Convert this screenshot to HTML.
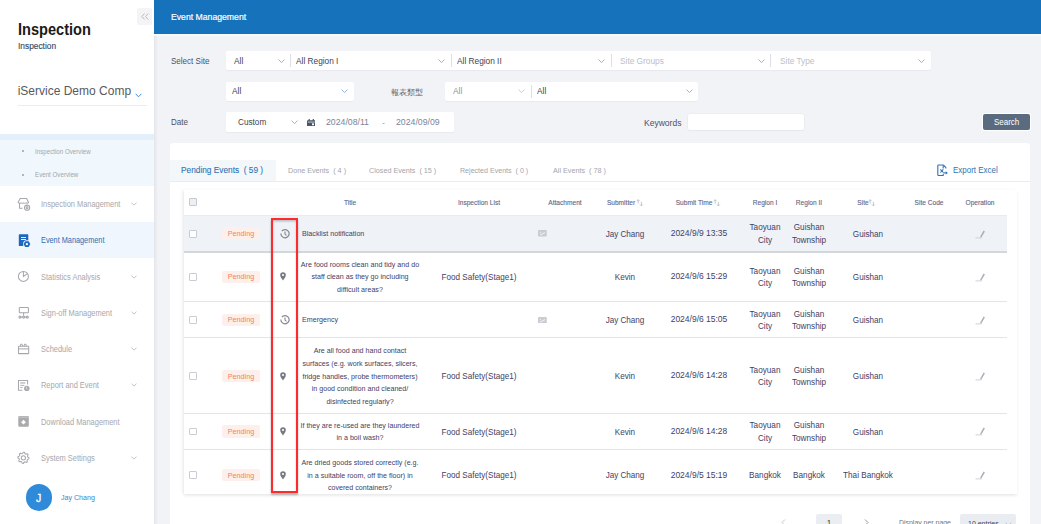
<!DOCTYPE html>
<html><head><meta charset="utf-8">
<style>
*{box-sizing:border-box;margin:0;padding:0}
html,body{width:1041px;height:524px;overflow:hidden;background:#f2f3f7;font-family:"Liberation Sans",sans-serif;}
.a{position:absolute;white-space:nowrap;line-height:1}
</style></head><body>
<div class="a" style="left:0.0px;top:0.0px;width:154.0px;height:524.0px;background:#fff;"></div>
<div class="a" style="left:154.0px;top:34.0px;width:4.0px;height:490.0px;background:linear-gradient(to right,#e4e5ea,#f2f3f7);"></div>
<div class="a" style="left:17.8px;top:21.07px;font-size:16.22px;color:#1b1b1b;transform:scaleX(0.900);transform-origin:0 0;font-weight:bold">Inspection</div>
<div class="a" style="left:17.8px;top:41.84px;font-size:9.29px;color:#3a4c63;transform:scaleX(0.900);transform-origin:0 0;-webkit-text-stroke:0.15px currentColor;">Inspection</div>
<div class="a" style="left:137.0px;top:8.0px;width:15.3px;height:16.8px;background:#f4f4f6;border-radius:2px"></div>
<svg class="a" style="left:141px;top:13px" width="8" height="7" viewBox="0 0 8 7"><path d="M3.5 0.5 L0.8 3.5 L3.5 6.5 M7.2 0.5 L4.5 3.5 L7.2 6.5" fill="none" stroke="#a8abb2" stroke-width="0.8"/></svg>
<div class="a" style="left:17.7px;top:84.84px;font-size:12.00px;color:#58595c;">iService Demo Comp</div>
<svg class="a" style="left:135px;top:92.5px" width="7" height="5" viewBox="0 0 7 5"><path d="M0.6 0.8 L3.5 3.8 L6.4 0.8" fill="none" stroke="#3a8ee6" stroke-width="1"/></svg>
<div class="a" style="left:17.7px;top:105.0px;width:129.5px;height:1.0px;background:#ececec;"></div>
<div class="a" style="left:0.0px;top:134.0px;width:154.0px;height:6.0px;background:#e3f0fb;"></div>
<div class="a" style="left:0.0px;top:140.0px;width:154.0px;height:46.0px;background:#f0f7fd;"></div>
<div class="a" style="left:22.4px;top:150.3px;width:2.0px;height:2.0px;background:#a0a0a0;border-radius:50%"></div>
<div class="a" style="left:34.9px;top:149.17px;font-size:6.89px;color:#a6a6a6;transform:scaleX(0.900);transform-origin:0 0;">Inspection Overview</div>
<div class="a" style="left:22.4px;top:173.5px;width:2.0px;height:2.0px;background:#a0a0a0;border-radius:50%"></div>
<div class="a" style="left:34.9px;top:172.37px;font-size:6.89px;color:#a6a6a6;transform:scaleX(0.900);transform-origin:0 0;">Event Overview</div>
<div class="a" style="left:0.0px;top:222.0px;width:154.0px;height:36.0px;background:#eff6fd;"></div>
<div class="a" style="left:40.8px;top:201.19px;font-size:8.28px;color:#a6a8ad;transform:scaleX(0.900);transform-origin:0 0;">Inspection Management</div>
<svg class="a" style="left:130.5px;top:202.2px" width="6" height="4" viewBox="0 0 6 4"><path d="M0.5 0.6 L3 3.2 L5.5 0.6" fill="none" stroke="#b4b6bb" stroke-width="0.8"/></svg>
<div class="a" style="left:40.8px;top:237.42px;font-size:8.13px;color:#2c6fb5;transform:scaleX(0.900);transform-origin:0 0;">Event Management</div>
<div class="a" style="left:40.8px;top:273.59px;font-size:8.28px;color:#a6a8ad;transform:scaleX(0.900);transform-origin:0 0;">Statistics Analysis</div>
<svg class="a" style="left:130.5px;top:274.6px" width="6" height="4" viewBox="0 0 6 4"><path d="M0.5 0.6 L3 3.2 L5.5 0.6" fill="none" stroke="#b4b6bb" stroke-width="0.8"/></svg>
<div class="a" style="left:40.8px;top:309.99px;font-size:8.28px;color:#a6a8ad;transform:scaleX(0.900);transform-origin:0 0;">Sign-off Management</div>
<svg class="a" style="left:130.5px;top:311.0px" width="6" height="4" viewBox="0 0 6 4"><path d="M0.5 0.6 L3 3.2 L5.5 0.6" fill="none" stroke="#b4b6bb" stroke-width="0.8"/></svg>
<div class="a" style="left:40.8px;top:346.29px;font-size:8.28px;color:#a6a8ad;transform:scaleX(0.900);transform-origin:0 0;">Schedule</div>
<svg class="a" style="left:130.5px;top:347.3px" width="6" height="4" viewBox="0 0 6 4"><path d="M0.5 0.6 L3 3.2 L5.5 0.6" fill="none" stroke="#b4b6bb" stroke-width="0.8"/></svg>
<div class="a" style="left:40.8px;top:382.39px;font-size:8.28px;color:#a6a8ad;transform:scaleX(0.900);transform-origin:0 0;">Report and Event</div>
<svg class="a" style="left:130.5px;top:383.4px" width="6" height="4" viewBox="0 0 6 4"><path d="M0.5 0.6 L3 3.2 L5.5 0.6" fill="none" stroke="#b4b6bb" stroke-width="0.8"/></svg>
<div class="a" style="left:40.8px;top:418.79px;font-size:8.28px;color:#a6a8ad;transform:scaleX(0.900);transform-origin:0 0;">Download Management</div>
<div class="a" style="left:40.8px;top:455.09px;font-size:8.28px;color:#a6a8ad;transform:scaleX(0.900);transform-origin:0 0;">System Settings</div>
<svg class="a" style="left:130.5px;top:456.1px" width="6" height="4" viewBox="0 0 6 4"><path d="M0.5 0.6 L3 3.2 L5.5 0.6" fill="none" stroke="#b4b6bb" stroke-width="0.8"/></svg>
<svg class="a" style="left:14px;top:195px" width="20" height="18" viewBox="0 0 20 18"><g fill="none" stroke="#a6a8ad" stroke-width="1.05" stroke-linejoin="round"><path d="M6.2 3.4 H12.6 L14.6 7.4 Q13.6 8.6 12.2 7.9 Q11 8.7 9.6 7.9 Q8.2 8.7 6.9 7.9 Q5.4 8.6 4 7.4 Z"/><path d="M5.5 8.3 V13.3 H8.6"/><circle cx="13.1" cy="12.7" r="2.6"/><circle cx="13.1" cy="12.7" r="0.9"/></g></svg>
<svg class="a" style="left:14px;top:231px" width="20" height="18" viewBox="0 0 20 18"><rect x="4.8" y="3.3" width="9.5" height="11.7" rx="0.6" fill="#1d67c1"/><rect x="7" y="6" width="5" height="0.9" fill="#fff"/><rect x="7" y="8" width="5" height="0.9" fill="#fff"/><circle cx="12.9" cy="13.1" r="3.9" fill="#f0f7fd"/><path d="M11.2 10.3 H14.6 L16.3 13.1 L14.6 15.9 H11.2 L9.5 13.1 Z" fill="#1d67c1"/><circle cx="12.9" cy="13.1" r="1.2" fill="#fff"/></svg>
<svg class="a" style="left:14px;top:268px" width="20" height="18" viewBox="0 0 20 18"><g fill="none" stroke="#a6a8ad" stroke-width="1.05"><circle cx="9.4" cy="8.4" r="5"/><path d="M9.4 3.4 V8.4 L13.4 5.6"/></g></svg>
<svg class="a" style="left:14px;top:304px" width="20" height="18" viewBox="0 0 20 18"><g fill="none" stroke="#a6a8ad" stroke-width="1.05"><rect x="5.3" y="3.4" width="9.1" height="5.4" rx="0.6"/><path d="M9.6 8.8 V11.8"/><circle cx="5.9" cy="13.1" r="1"/><circle cx="9.6" cy="13.1" r="1"/><circle cx="13.3" cy="13.1" r="1"/><path d="M6.9 13.1 H8.6 M10.6 13.1 H12.3"/></g></svg>
<svg class="a" style="left:14px;top:340px" width="20" height="18" viewBox="0 0 20 18"><g fill="none" stroke="#a6a8ad" stroke-width="1.05"><rect x="4.5" y="6.3" width="10.2" height="7.3" rx="0.4"/><path d="M4.5 8.9 H14.7"/><path d="M6.2 6.3 Q6.4 3.9 7.4 3.9 Q8.4 3.9 8.6 6.3 M10 6.3 Q10.2 3.9 11.2 3.9 Q12.2 3.9 12.4 6.3"/></g></svg>
<svg class="a" style="left:14px;top:376px" width="20" height="18" viewBox="0 0 20 18"><g fill="none" stroke="#a6a8ad" stroke-width="1.05"><path d="M8.4 14.3 H4.5 V4.4 H13.6 V8.4"/></g><rect x="6.2" y="6.4" width="5.2" height="1.1" fill="#a6a8ad"/><rect x="6.2" y="8.9" width="4.2" height="0.9" fill="#a6a8ad"/><rect x="6.2" y="11" width="2.3" height="0.9" fill="#a6a8ad"/><circle cx="12.8" cy="12.4" r="2.7" fill="#a6a8ad"/><path d="M12.5 10.9 V12.6 L13.6 13.5" fill="none" stroke="#fff" stroke-width="0.6"/></svg>
<svg class="a" style="left:14px;top:412px" width="20" height="18" viewBox="0 0 20 18"><rect x="4.3" y="4" width="10.5" height="10.8" rx="1" fill="#a9aaad"/><rect x="4.8" y="4.4" width="9.5" height="1.6" fill="#bdbec1"/><path d="M9.5 7.8 L11.9 10.2 L9.5 12.6 L7.1 10.2 Z" fill="#fff"/></svg>
<svg class="a" style="left:14px;top:449px" width="20" height="18" viewBox="0 0 20 18"><g fill="none" stroke="#a6a8ad" stroke-width="1.05" stroke-linejoin="round"><path d="M9.40 3.20 L10.49 3.31 L11.08 4.73 L11.84 5.14 L13.36 4.84 L14.06 5.69 L13.47 7.12 L13.72 7.94 L15.00 8.80 L14.89 9.89 L13.47 10.48 L13.06 11.24 L13.36 12.76 L12.51 13.46 L11.08 12.87 L10.26 13.12 L9.40 14.40 L8.31 14.29 L7.72 12.87 L6.96 12.46 L5.44 12.76 L4.74 11.91 L5.33 10.48 L5.08 9.66 L3.80 8.80 L3.91 7.71 L5.33 7.12 L5.74 6.36 L5.44 4.84 L6.29 4.14 L7.72 4.73 L8.54 4.48 Z"/><circle cx="9.4" cy="8.8" r="2.1"/></g></svg>
<div class="a" style="left:25.8px;top:484.2px;width:26.5px;height:26.5px;background:#2f8bd9;border-radius:50%"></div>
<div class="a" style="left:35.9px;top:491.82px;font-size:11.67px;color:#fff;transform:scaleX(0.900);transform-origin:0 0;-webkit-text-stroke:0.3px #fff;">J</div>
<div class="a" style="left:61.1px;top:494.05px;font-size:7.86px;color:#3b87c9;transform:scaleX(0.900);transform-origin:0 0;">Jay Chang</div>
<div class="a" style="left:154.0px;top:0.0px;width:887.0px;height:34.0px;background:#1572bb;"></div>
<div class="a" style="left:154.0px;top:34.0px;width:887.0px;height:2.0px;background:#f8f8fa;"></div>
<div class="a" style="left:170.7px;top:12.24px;font-size:9.64px;color:#ffffff;transform:scaleX(0.900);transform-origin:0 0;-webkit-text-stroke:0.2px #fff;">Event Management</div>
<div class="a" style="left:170.5px;top:56.83px;font-size:8.94px;color:#4d5263;transform:scaleX(0.900);transform-origin:0 0;">Select Site</div>
<div class="a" style="left:226.0px;top:51.0px;width:705.0px;height:19.2px;background:#fff;border-radius:2px;box-shadow:0 1px 1px rgba(40,50,80,0.05);"></div>
<div class="a" style="left:234.4px;top:56.59px;font-size:9.22px;color:#3f4350;transform:scaleX(0.900);transform-origin:0 0;">All</div>
<svg class="a" style="left:277.5px;top:58.6px" width="7" height="4.5" viewBox="0 0 7 4.5"><path d="M0.6 0.6 L3.5 3.6 L6.4 0.6" fill="none" stroke="#8fa9d8" stroke-width="0.9"/></svg>
<div class="a" style="left:289.9px;top:54.1px;width:1.0px;height:13.0px;background:#dcdfe5;"></div>
<div class="a" style="left:296.0px;top:56.59px;font-size:9.22px;color:#3f4350;transform:scaleX(0.900);transform-origin:0 0;">All Region I</div>
<svg class="a" style="left:437.5px;top:58.6px" width="7" height="4.5" viewBox="0 0 7 4.5"><path d="M0.6 0.6 L3.5 3.6 L6.4 0.6" fill="none" stroke="#8fa9d8" stroke-width="0.9"/></svg>
<div class="a" style="left:450.5px;top:54.1px;width:1.0px;height:13.0px;background:#dcdfe5;"></div>
<div class="a" style="left:457.0px;top:56.59px;font-size:9.22px;color:#3f4350;transform:scaleX(0.900);transform-origin:0 0;">All Region II</div>
<svg class="a" style="left:597.7px;top:58.6px" width="7" height="4.5" viewBox="0 0 7 4.5"><path d="M0.6 0.6 L3.5 3.6 L6.4 0.6" fill="none" stroke="#8fa9d8" stroke-width="0.9"/></svg>
<div class="a" style="left:610.5px;top:54.1px;width:1.0px;height:13.0px;background:#dcdfe5;"></div>
<div class="a" style="left:619.8px;top:56.59px;font-size:9.22px;color:#b9bfca;transform:scaleX(0.900);transform-origin:0 0;">Site Groups</div>
<svg class="a" style="left:757.7px;top:58.6px" width="7" height="4.5" viewBox="0 0 7 4.5"><path d="M0.6 0.6 L3.5 3.6 L6.4 0.6" fill="none" stroke="#8fa9d8" stroke-width="0.9"/></svg>
<div class="a" style="left:770.3px;top:54.1px;width:1.0px;height:13.0px;background:#dcdfe5;"></div>
<div class="a" style="left:779.6px;top:56.59px;font-size:9.22px;color:#b9bfca;transform:scaleX(0.900);transform-origin:0 0;">Site Type</div>
<svg class="a" style="left:918.4px;top:58.6px" width="7" height="4.5" viewBox="0 0 7 4.5"><path d="M0.6 0.6 L3.5 3.6 L6.4 0.6" fill="none" stroke="#8fa9d8" stroke-width="0.9"/></svg>
<div class="a" style="left:226.0px;top:81.6px;width:128.0px;height:19.4px;background:#fff;border-radius:2px;box-shadow:0 1px 1px rgba(40,50,80,0.05);"></div>
<div class="a" style="left:231.6px;top:87.29px;font-size:9.22px;color:#3f4350;transform:scaleX(0.900);transform-origin:0 0;">All</div>
<svg class="a" style="left:341.2px;top:89.3px" width="7" height="4.5" viewBox="0 0 7 4.5"><path d="M0.6 0.6 L3.5 3.6 L6.4 0.6" fill="none" stroke="#8fa9d8" stroke-width="0.9"/></svg>
<div class="a" style="left:390.6px;top:88.96px;font-size:8.20px;color:#5b5e66;">報表類型</div>
<div class="a" style="left:445.0px;top:81.6px;width:253.0px;height:19.4px;background:#fff;border-radius:2px;box-shadow:0 1px 1px rgba(40,50,80,0.05);"></div>
<div class="a" style="left:453.2px;top:87.29px;font-size:9.22px;color:#8a91a8;transform:scaleX(0.900);transform-origin:0 0;">All</div>
<svg class="a" style="left:518.0px;top:89.3px" width="7" height="4.5" viewBox="0 0 7 4.5"><path d="M0.6 0.6 L3.5 3.6 L6.4 0.6" fill="none" stroke="#c3c7cf" stroke-width="0.9"/></svg>
<div class="a" style="left:530.9px;top:84.8px;width:1.0px;height:13.0px;background:#dcdfe5;"></div>
<div class="a" style="left:536.9px;top:87.29px;font-size:9.22px;color:#3f4350;transform:scaleX(0.900);transform-origin:0 0;">All</div>
<svg class="a" style="left:685.5px;top:89.3px" width="7" height="4.5" viewBox="0 0 7 4.5"><path d="M0.6 0.6 L3.5 3.6 L6.4 0.6" fill="none" stroke="#8fa9d8" stroke-width="0.9"/></svg>
<div class="a" style="left:170.5px;top:118.43px;font-size:8.94px;color:#4d5263;transform:scaleX(0.900);transform-origin:0 0;">Date</div>
<div class="a" style="left:226.0px;top:112.2px;width:228.3px;height:19.8px;background:#fff;border-radius:2px;box-shadow:0 1px 1px rgba(40,50,80,0.05);"></div>
<div class="a" style="left:238.1px;top:118.28px;font-size:9.12px;color:#3f4350;transform:scaleX(0.900);transform-origin:0 0;">Custom</div>
<svg class="a" style="left:290.8px;top:120.1px" width="7" height="4.5" viewBox="0 0 7 4.5"><path d="M0.6 0.6 L3.5 3.6 L6.4 0.6" fill="none" stroke="#8fa9d8" stroke-width="0.9"/></svg>
<svg class="a" style="left:306.8px;top:118.6px" width="8.5" height="7.6" viewBox="0 0 8.5 7.6"><rect x="0" y="1.2" width="8.5" height="6.4" rx="0.8" fill="#4a5568"/><rect x="1.6" y="0" width="1.2" height="2" fill="#4a5568"/><rect x="5.7" y="0" width="1.2" height="2" fill="#4a5568"/><rect x="0.8" y="2.7" width="6.9" height="0.7" fill="#fff"/><rect x="5" y="4.4" width="2" height="1.8" fill="#fff"/></svg>
<div class="a" style="left:325.8px;top:117.71px;font-size:9.08px;color:#7c8399;transform:scaleX(0.960);transform-origin:0 0;">2024/08/11</div>
<div class="a" style="left:382.3px;top:117.80px;font-size:9.69px;color:#9aa0b0;transform:scaleX(0.900);transform-origin:0 0;">-</div>
<div class="a" style="left:396.0px;top:117.71px;font-size:9.08px;color:#7c8399;transform:scaleX(0.960);transform-origin:0 0;">2024/09/09</div>
<div class="a" style="left:643.7px;top:117.59px;font-size:9.47px;color:#4d5263;transform:scaleX(0.900);transform-origin:0 0;">Keywords</div>
<div class="a" style="left:687.5px;top:113.7px;width:116.8px;height:16.0px;background:#fff;border-radius:2px;box-shadow:0 1px 1px rgba(40,50,80,0.05);box-shadow:0 0 0 0.5px #e6e8ee,0 1px 1px rgba(40,50,80,0.06)"></div>
<div class="a" style="left:983.2px;top:113.8px;width:46.8px;height:16.2px;background:#5a6b7f;border-radius:2px;box-shadow:0 0 0 1px #fff"></div>
<div class="a" style="left:993.9px;top:118.18px;font-size:8.89px;color:#ffffff;transform:scaleX(0.900);transform-origin:0 0;">Search</div>
<div class="a" style="left:170.4px;top:143.0px;width:859.6px;height:400.0px;background:#fff;border-radius:4px"></div>
<div class="a" style="left:170.4px;top:159.6px;width:106.0px;height:21.6px;background:#f4f7fa;"></div>
<div class="a" style="left:170.4px;top:181.0px;width:859.6px;height:1.0px;background:#e9ebef;"></div>
<div class="a" style="left:181.4px;top:166.29px;font-size:9.22px;color:#2e73b4;transform:scaleX(0.900);transform-origin:0 0;-webkit-text-stroke:0.1px currentColor;">Pending Events&nbsp;&nbsp;( 59 )</div>
<div class="a" style="left:287.5px;top:167.23px;font-size:8.00px;color:#a2a5ac;transform:scaleX(0.900);transform-origin:0 0;">Done Events&nbsp;&nbsp;( 4 )</div>
<div class="a" style="left:368.9px;top:167.23px;font-size:8.00px;color:#a2a5ac;transform:scaleX(0.900);transform-origin:0 0;">Closed Events&nbsp;&nbsp;( 15 )</div>
<div class="a" style="left:460.2px;top:167.32px;font-size:7.89px;color:#a2a5ac;transform:scaleX(0.900);transform-origin:0 0;">Rejected Events&nbsp;&nbsp;( 0 )</div>
<div class="a" style="left:552.8px;top:167.23px;font-size:8.00px;color:#a2a5ac;transform:scaleX(0.900);transform-origin:0 0;">All Events&nbsp;&nbsp;( 78 )</div>
<svg class="a" style="left:933px;top:160px" width="20" height="20" viewBox="0 0 20 20"><g fill="none" stroke="#2e73b4" stroke-width="1.1" stroke-linejoin="round"><path d="M10.4 5 H5.6 Q4.8 5 4.8 5.8 V14.7 Q4.8 15.5 5.6 15.5 H10.2 V13.9"/><path d="M10.4 5 L12.9 7.6 V8.6"/><path d="M10.2 5.2 V8.4"/><path d="M7.4 9.3 L10.3 12.5 M10.3 9.3 L7.4 12.5"/><path d="M10.2 12.9 H13.2"/></g><path d="M12.7 11.2 L14.9 12.9 L12.7 14.6 Z" fill="#2e73b4"/></svg>
<div class="a" style="left:953.3px;top:165.99px;font-size:8.87px;color:#2e73b4;transform:scaleX(0.900);transform-origin:0 0;">Export Excel</div>
<div class="a" style="left:183.6px;top:189.6px;width:833.8px;height:304.4px;background:#fff;box-shadow:-2px 0 3px rgba(0,0,0,0.05),0 2px 3px rgba(0,0,0,0.07);overflow:hidden">
<div class="a" style="left:0.0px;top:25.2px;width:823.8px;height:36.7px;background:#eff2f6;box-shadow:inset 0 1px 0 #e8ebf1"></div>
<div class="a" style="left:0.0px;top:61.4px;width:823.8px;height:1.6px;background:#d3d7dc;"></div>
<div class="a" style="left:0.0px;top:111.4px;width:823.8px;height:1.0px;background:#e1e4e8;"></div>
<div class="a" style="left:0.0px;top:147.9px;width:823.8px;height:1.0px;background:#e1e4e8;"></div>
<div class="a" style="left:0.0px;top:223.4px;width:823.8px;height:1.0px;background:#e1e4e8;"></div>
<div class="a" style="left:0.0px;top:259.9px;width:823.8px;height:1.0px;background:#e1e4e8;"></div>
</div>
<div class="a" style="left:189.0px;top:198.0px;width:7.8px;height:7.8px;background:#eceff3;border:1px solid #c6c9ce;border-radius:1px"></div>
<div class="a" style="left:249.9px;width:200px;text-align:center;top:198.99px;font-size:7.33px;color:#5b6385;transform:scaleX(0.900);-webkit-text-stroke:0.1px currentColor;">Title</div>
<div class="a" style="left:379.3px;width:200px;text-align:center;top:198.99px;font-size:7.33px;color:#5b6385;transform:scaleX(0.900);-webkit-text-stroke:0.1px currentColor;">Inspection List</div>
<div class="a" style="left:465.2px;width:200px;text-align:center;top:198.99px;font-size:7.33px;color:#5b6385;transform:scaleX(0.900);-webkit-text-stroke:0.1px currentColor;">Attachment</div>
<div class="a" style="left:521.0px;width:200px;text-align:center;top:198.99px;font-size:7.33px;color:#5b6385;transform:scaleX(0.900);-webkit-text-stroke:0.1px currentColor;">Submitter</div>
<div class="a" style="left:594.4px;width:200px;text-align:center;top:198.99px;font-size:7.33px;color:#5b6385;transform:scaleX(0.900);-webkit-text-stroke:0.1px currentColor;">Submit Time</div>
<div class="a" style="left:664.9px;width:200px;text-align:center;top:198.99px;font-size:7.33px;color:#5b6385;transform:scaleX(0.900);-webkit-text-stroke:0.1px currentColor;">Region I</div>
<div class="a" style="left:708.6px;width:200px;text-align:center;top:198.99px;font-size:7.33px;color:#5b6385;transform:scaleX(0.900);-webkit-text-stroke:0.1px currentColor;">Region II</div>
<div class="a" style="left:763.0px;width:200px;text-align:center;top:198.99px;font-size:7.33px;color:#5b6385;transform:scaleX(0.900);-webkit-text-stroke:0.1px currentColor;">Site</div>
<div class="a" style="left:829.3px;width:200px;text-align:center;top:198.99px;font-size:7.33px;color:#5b6385;transform:scaleX(0.900);-webkit-text-stroke:0.1px currentColor;">Site Code</div>
<div class="a" style="left:880.0px;width:200px;text-align:center;top:198.99px;font-size:7.33px;color:#5b6385;transform:scaleX(0.900);-webkit-text-stroke:0.1px currentColor;">Operation</div>
<svg class="a" style="left:635.8px;top:198.6px" width="8" height="8" viewBox="0 0 8 8"><path d="M2.2 4.6 V0.7 M0.7 2.2 L2.2 0.7 L3.7 2.2 M5.4 2.8 V6.9 M3.9 5.4 L5.4 6.9 L6.9 5.4" fill="none" stroke="#b3b7be" stroke-width="0.75"/></svg>
<svg class="a" style="left:712.8px;top:198.6px" width="8" height="8" viewBox="0 0 8 8"><path d="M2.2 4.6 V0.7 M0.7 2.2 L2.2 0.7 L3.7 2.2 M5.4 2.8 V6.9 M3.9 5.4 L5.4 6.9 L6.9 5.4" fill="none" stroke="#b3b7be" stroke-width="0.75"/></svg>
<svg class="a" style="left:868.2px;top:198.6px" width="8" height="8" viewBox="0 0 8 8"><path d="M2.2 4.6 V0.7 M0.7 2.2 L2.2 0.7 L3.7 2.2 M5.4 2.8 V6.9 M3.9 5.4 L5.4 6.9 L6.9 5.4" fill="none" stroke="#b3b7be" stroke-width="0.75"/></svg>
<div class="a" style="left:189.0px;top:229.8px;width:7.8px;height:7.8px;background:#fff;border:1px solid #c9ccd2;border-radius:1px"></div>
<div class="a" style="left:222.3px;top:227.4px;width:37.3px;height:12.6px;background:#fdf0ec;border-radius:2px"></div>
<div class="a" style="left:141.0px;width:200px;text-align:center;top:230.23px;font-size:8.00px;color:#f2825e;transform:scaleX(0.900);">Pending</div>
<svg class="a" style="left:280.3px;top:229.0px" width="10" height="10" viewBox="0 0 10 10"><path d="M1.9 2.0 A4.1 4.1 0 1 1 0.9 4.5" fill="none" stroke="#80848c" stroke-width="1.15"/><path d="M5 2.4 V5.1 L6.5 6.4" fill="none" stroke="#80848c" stroke-width="1.05"/></svg>
<div class="a" style="left:301.5px;top:230.28px;font-size:7.94px;color:#3f4266;transform:scaleX(0.900);transform-origin:0 0;">Blacklist notification</div>
<svg class="a" style="left:538.2px;top:230.3px" width="8.8" height="6.6" viewBox="0 0 8.8 6.6"><rect x="0" y="0" width="8.8" height="6.6" rx="1" fill="#c9cdd3"/><path d="M2.2 5 L7 2.6" stroke="#f2f4f6" stroke-width="1"/><circle cx="2.5" cy="2.3" r="0.6" fill="#f2f4f6"/></svg>
<div class="a" style="left:525.3px;width:200px;text-align:center;top:229.78px;font-size:9.00px;color:#3f4266;transform:scaleX(0.900);">Jay Chang</div>
<div class="a" style="left:598.5px;width:200px;text-align:center;top:229.10px;font-size:8.85px;color:#3f4266;transform:scaleX(0.960);">2024/9/9 13:35</div>
<div class="a" style="left:664.9px;width:200px;text-align:center;top:223.44px;font-size:9.11px;color:#3f4266;transform:scaleX(0.900);">Taoyuan</div>
<div class="a" style="left:664.9px;width:200px;text-align:center;top:235.84px;font-size:9.11px;color:#3f4266;transform:scaleX(0.900);">City</div>
<div class="a" style="left:708.8px;width:200px;text-align:center;top:223.44px;font-size:9.11px;color:#3f4266;transform:scaleX(0.900);">Guishan</div>
<div class="a" style="left:708.8px;width:200px;text-align:center;top:235.84px;font-size:9.11px;color:#3f4266;transform:scaleX(0.900);">Township</div>
<div class="a" style="left:767.6px;width:200px;text-align:center;top:229.73px;font-size:9.06px;color:#3f4266;transform:scaleX(0.900);">Guishan</div>
<svg class="a" style="left:974.5px;top:229.5px" width="11" height="9" viewBox="0 0 11 9"><path d="M0.5 7.9 H6.8" stroke="#c3c7cd" stroke-width="0.8"/><path d="M8.6 0.6 L9.9 1.4 L6.3 7.6 L5.0 6.9 Z" fill="#a9aeb6"/></svg>
<div class="a" style="left:189.0px;top:272.9px;width:7.8px;height:7.8px;background:#fff;border:1px solid #c9ccd2;border-radius:1px"></div>
<div class="a" style="left:222.3px;top:270.5px;width:37.3px;height:12.6px;background:#fdf0ec;border-radius:2px"></div>
<div class="a" style="left:141.0px;width:200px;text-align:center;top:273.33px;font-size:8.00px;color:#f2825e;transform:scaleX(0.900);">Pending</div>
<svg class="a" style="left:280.4px;top:272.4px" width="6" height="9" viewBox="0 0 6 9"><path d="M3 8.4 C1.6 6.6 0.2 5 0.2 3.0 A2.8 2.8 0 0 1 5.8 3.0 C5.8 5 4.4 6.6 3 8.4 Z M3 1.9 A1.05 1.05 0 1 0 3 4.0 A1.05 1.05 0 1 0 3 1.9 Z" fill="#767a82" fill-rule="evenodd"/></svg>
<div class="a" style="left:259.5px;width:200px;text-align:center;top:260.77px;font-size:7.91px;color:#3f4266;transform:scaleX(0.900);">Are food rooms clean and tidy and do</div>
<div class="a" style="left:259.5px;width:200px;text-align:center;top:273.37px;font-size:7.91px;color:#3f4266;transform:scaleX(0.900);">staff clean as they go including</div>
<div class="a" style="left:259.5px;width:200px;text-align:center;top:285.97px;font-size:7.91px;color:#3f4266;transform:scaleX(0.900);">difficult areas?</div>
<div class="a" style="left:379.0px;width:200px;text-align:center;top:272.85px;font-size:9.03px;color:#3f4266;transform:scaleX(0.900);">Food Safety(Stage1)</div>
<div class="a" style="left:525.3px;width:200px;text-align:center;top:272.88px;font-size:9.00px;color:#3f4266;transform:scaleX(0.900);">Kevin</div>
<div class="a" style="left:598.5px;width:200px;text-align:center;top:272.20px;font-size:8.85px;color:#3f4266;transform:scaleX(0.960);">2024/9/6 15:29</div>
<div class="a" style="left:664.9px;width:200px;text-align:center;top:266.54px;font-size:9.11px;color:#3f4266;transform:scaleX(0.900);">Taoyuan</div>
<div class="a" style="left:664.9px;width:200px;text-align:center;top:278.94px;font-size:9.11px;color:#3f4266;transform:scaleX(0.900);">City</div>
<div class="a" style="left:708.8px;width:200px;text-align:center;top:266.54px;font-size:9.11px;color:#3f4266;transform:scaleX(0.900);">Guishan</div>
<div class="a" style="left:708.8px;width:200px;text-align:center;top:278.94px;font-size:9.11px;color:#3f4266;transform:scaleX(0.900);">Township</div>
<div class="a" style="left:767.6px;width:200px;text-align:center;top:272.83px;font-size:9.06px;color:#3f4266;transform:scaleX(0.900);">Guishan</div>
<svg class="a" style="left:974.5px;top:272.6px" width="11" height="9" viewBox="0 0 11 9"><path d="M0.5 7.9 H6.8" stroke="#c3c7cd" stroke-width="0.8"/><path d="M8.6 0.6 L9.9 1.4 L6.3 7.6 L5.0 6.9 Z" fill="#a9aeb6"/></svg>
<div class="a" style="left:189.0px;top:316.0px;width:7.8px;height:7.8px;background:#fff;border:1px solid #c9ccd2;border-radius:1px"></div>
<div class="a" style="left:222.3px;top:313.6px;width:37.3px;height:12.6px;background:#fdf0ec;border-radius:2px"></div>
<div class="a" style="left:141.0px;width:200px;text-align:center;top:316.43px;font-size:8.00px;color:#f2825e;transform:scaleX(0.900);">Pending</div>
<svg class="a" style="left:280.3px;top:315.2px" width="10" height="10" viewBox="0 0 10 10"><path d="M1.9 2.0 A4.1 4.1 0 1 1 0.9 4.5" fill="none" stroke="#80848c" stroke-width="1.15"/><path d="M5 2.4 V5.1 L6.5 6.4" fill="none" stroke="#80848c" stroke-width="1.05"/></svg>
<div class="a" style="left:301.5px;top:316.48px;font-size:7.94px;color:#3f4266;transform:scaleX(0.900);transform-origin:0 0;">Emergency</div>
<svg class="a" style="left:538.2px;top:316.5px" width="8.8" height="6.6" viewBox="0 0 8.8 6.6"><rect x="0" y="0" width="8.8" height="6.6" rx="1" fill="#c9cdd3"/><path d="M2.2 5 L7 2.6" stroke="#f2f4f6" stroke-width="1"/><circle cx="2.5" cy="2.3" r="0.6" fill="#f2f4f6"/></svg>
<div class="a" style="left:525.3px;width:200px;text-align:center;top:315.98px;font-size:9.00px;color:#3f4266;transform:scaleX(0.900);">Jay Chang</div>
<div class="a" style="left:598.5px;width:200px;text-align:center;top:315.30px;font-size:8.85px;color:#3f4266;transform:scaleX(0.960);">2024/9/6 15:05</div>
<div class="a" style="left:664.9px;width:200px;text-align:center;top:309.64px;font-size:9.11px;color:#3f4266;transform:scaleX(0.900);">Taoyuan</div>
<div class="a" style="left:664.9px;width:200px;text-align:center;top:322.04px;font-size:9.11px;color:#3f4266;transform:scaleX(0.900);">City</div>
<div class="a" style="left:708.8px;width:200px;text-align:center;top:309.64px;font-size:9.11px;color:#3f4266;transform:scaleX(0.900);">Guishan</div>
<div class="a" style="left:708.8px;width:200px;text-align:center;top:322.04px;font-size:9.11px;color:#3f4266;transform:scaleX(0.900);">Township</div>
<div class="a" style="left:767.6px;width:200px;text-align:center;top:315.93px;font-size:9.06px;color:#3f4266;transform:scaleX(0.900);">Guishan</div>
<svg class="a" style="left:974.5px;top:315.7px" width="11" height="9" viewBox="0 0 11 9"><path d="M0.5 7.9 H6.8" stroke="#c3c7cd" stroke-width="0.8"/><path d="M8.6 0.6 L9.9 1.4 L6.3 7.6 L5.0 6.9 Z" fill="#a9aeb6"/></svg>
<div class="a" style="left:189.0px;top:372.1px;width:7.8px;height:7.8px;background:#fff;border:1px solid #c9ccd2;border-radius:1px"></div>
<div class="a" style="left:222.3px;top:369.7px;width:37.3px;height:12.6px;background:#fdf0ec;border-radius:2px"></div>
<div class="a" style="left:141.0px;width:200px;text-align:center;top:372.53px;font-size:8.00px;color:#f2825e;transform:scaleX(0.900);">Pending</div>
<svg class="a" style="left:280.4px;top:371.6px" width="6" height="9" viewBox="0 0 6 9"><path d="M3 8.4 C1.6 6.6 0.2 5 0.2 3.0 A2.8 2.8 0 0 1 5.8 3.0 C5.8 5 4.4 6.6 3 8.4 Z M3 1.9 A1.05 1.05 0 1 0 3 4.0 A1.05 1.05 0 1 0 3 1.9 Z" fill="#767a82" fill-rule="evenodd"/></svg>
<div class="a" style="left:259.5px;width:200px;text-align:center;top:347.37px;font-size:7.91px;color:#3f4266;transform:scaleX(0.900);">Are all food and hand contact</div>
<div class="a" style="left:259.5px;width:200px;text-align:center;top:359.97px;font-size:7.91px;color:#3f4266;transform:scaleX(0.900);">surfaces (e.g. work surfaces, slicers,</div>
<div class="a" style="left:259.5px;width:200px;text-align:center;top:372.57px;font-size:7.91px;color:#3f4266;transform:scaleX(0.900);">fridge handles, probe thermometers)</div>
<div class="a" style="left:259.5px;width:200px;text-align:center;top:385.17px;font-size:7.91px;color:#3f4266;transform:scaleX(0.900);">in good condition and cleaned/</div>
<div class="a" style="left:259.5px;width:200px;text-align:center;top:397.77px;font-size:7.91px;color:#3f4266;transform:scaleX(0.900);">disinfected regularly?</div>
<div class="a" style="left:379.0px;width:200px;text-align:center;top:372.05px;font-size:9.03px;color:#3f4266;transform:scaleX(0.900);">Food Safety(Stage1)</div>
<div class="a" style="left:525.3px;width:200px;text-align:center;top:372.08px;font-size:9.00px;color:#3f4266;transform:scaleX(0.900);">Kevin</div>
<div class="a" style="left:598.5px;width:200px;text-align:center;top:371.40px;font-size:8.85px;color:#3f4266;transform:scaleX(0.960);">2024/9/6 14:28</div>
<div class="a" style="left:664.9px;width:200px;text-align:center;top:365.74px;font-size:9.11px;color:#3f4266;transform:scaleX(0.900);">Taoyuan</div>
<div class="a" style="left:664.9px;width:200px;text-align:center;top:378.14px;font-size:9.11px;color:#3f4266;transform:scaleX(0.900);">City</div>
<div class="a" style="left:708.8px;width:200px;text-align:center;top:365.74px;font-size:9.11px;color:#3f4266;transform:scaleX(0.900);">Guishan</div>
<div class="a" style="left:708.8px;width:200px;text-align:center;top:378.14px;font-size:9.11px;color:#3f4266;transform:scaleX(0.900);">Township</div>
<div class="a" style="left:767.6px;width:200px;text-align:center;top:372.03px;font-size:9.06px;color:#3f4266;transform:scaleX(0.900);">Guishan</div>
<svg class="a" style="left:974.5px;top:371.8px" width="11" height="9" viewBox="0 0 11 9"><path d="M0.5 7.9 H6.8" stroke="#c3c7cd" stroke-width="0.8"/><path d="M8.6 0.6 L9.9 1.4 L6.3 7.6 L5.0 6.9 Z" fill="#a9aeb6"/></svg>
<div class="a" style="left:189.0px;top:427.7px;width:7.8px;height:7.8px;background:#fff;border:1px solid #c9ccd2;border-radius:1px"></div>
<div class="a" style="left:222.3px;top:425.3px;width:37.3px;height:12.6px;background:#fdf0ec;border-radius:2px"></div>
<div class="a" style="left:141.0px;width:200px;text-align:center;top:428.13px;font-size:8.00px;color:#f2825e;transform:scaleX(0.900);">Pending</div>
<svg class="a" style="left:280.4px;top:427.2px" width="6" height="9" viewBox="0 0 6 9"><path d="M3 8.4 C1.6 6.6 0.2 5 0.2 3.0 A2.8 2.8 0 0 1 5.8 3.0 C5.8 5 4.4 6.6 3 8.4 Z M3 1.9 A1.05 1.05 0 1 0 3 4.0 A1.05 1.05 0 1 0 3 1.9 Z" fill="#767a82" fill-rule="evenodd"/></svg>
<div class="a" style="left:259.5px;width:200px;text-align:center;top:421.87px;font-size:7.91px;color:#3f4266;transform:scaleX(0.900);">If they are re-used are they laundered</div>
<div class="a" style="left:259.5px;width:200px;text-align:center;top:434.47px;font-size:7.91px;color:#3f4266;transform:scaleX(0.900);">in a boil wash?</div>
<div class="a" style="left:379.0px;width:200px;text-align:center;top:427.65px;font-size:9.03px;color:#3f4266;transform:scaleX(0.900);">Food Safety(Stage1)</div>
<div class="a" style="left:525.3px;width:200px;text-align:center;top:427.68px;font-size:9.00px;color:#3f4266;transform:scaleX(0.900);">Kevin</div>
<div class="a" style="left:598.5px;width:200px;text-align:center;top:427.00px;font-size:8.85px;color:#3f4266;transform:scaleX(0.960);">2024/9/6 14:28</div>
<div class="a" style="left:664.9px;width:200px;text-align:center;top:421.34px;font-size:9.11px;color:#3f4266;transform:scaleX(0.900);">Taoyuan</div>
<div class="a" style="left:664.9px;width:200px;text-align:center;top:433.74px;font-size:9.11px;color:#3f4266;transform:scaleX(0.900);">City</div>
<div class="a" style="left:708.8px;width:200px;text-align:center;top:421.34px;font-size:9.11px;color:#3f4266;transform:scaleX(0.900);">Guishan</div>
<div class="a" style="left:708.8px;width:200px;text-align:center;top:433.74px;font-size:9.11px;color:#3f4266;transform:scaleX(0.900);">Township</div>
<div class="a" style="left:767.6px;width:200px;text-align:center;top:427.63px;font-size:9.06px;color:#3f4266;transform:scaleX(0.900);">Guishan</div>
<svg class="a" style="left:974.5px;top:427.4px" width="11" height="9" viewBox="0 0 11 9"><path d="M0.5 7.9 H6.8" stroke="#c3c7cd" stroke-width="0.8"/><path d="M8.6 0.6 L9.9 1.4 L6.3 7.6 L5.0 6.9 Z" fill="#a9aeb6"/></svg>
<div class="a" style="left:189.0px;top:471.3px;width:7.8px;height:7.8px;background:#fff;border:1px solid #c9ccd2;border-radius:1px"></div>
<div class="a" style="left:222.3px;top:468.9px;width:37.3px;height:12.6px;background:#fdf0ec;border-radius:2px"></div>
<div class="a" style="left:141.0px;width:200px;text-align:center;top:471.73px;font-size:8.00px;color:#f2825e;transform:scaleX(0.900);">Pending</div>
<svg class="a" style="left:280.4px;top:470.8px" width="6" height="9" viewBox="0 0 6 9"><path d="M3 8.4 C1.6 6.6 0.2 5 0.2 3.0 A2.8 2.8 0 0 1 5.8 3.0 C5.8 5 4.4 6.6 3 8.4 Z M3 1.9 A1.05 1.05 0 1 0 3 4.0 A1.05 1.05 0 1 0 3 1.9 Z" fill="#767a82" fill-rule="evenodd"/></svg>
<div class="a" style="left:259.5px;width:200px;text-align:center;top:459.17px;font-size:7.91px;color:#3f4266;transform:scaleX(0.900);">Are dried goods stored correctly (e.g.</div>
<div class="a" style="left:259.5px;width:200px;text-align:center;top:471.77px;font-size:7.91px;color:#3f4266;transform:scaleX(0.900);">in a suitable room, off the floor) in</div>
<div class="a" style="left:259.5px;width:200px;text-align:center;top:484.37px;font-size:7.91px;color:#3f4266;transform:scaleX(0.900);">covered containers?</div>
<div class="a" style="left:379.0px;width:200px;text-align:center;top:471.25px;font-size:9.03px;color:#3f4266;transform:scaleX(0.900);">Food Safety(Stage1)</div>
<div class="a" style="left:525.3px;width:200px;text-align:center;top:471.28px;font-size:9.00px;color:#3f4266;transform:scaleX(0.900);">Jay Chang</div>
<div class="a" style="left:598.5px;width:200px;text-align:center;top:470.60px;font-size:8.85px;color:#3f4266;transform:scaleX(0.960);">2024/9/5 15:19</div>
<div class="a" style="left:664.9px;width:200px;text-align:center;top:471.14px;font-size:9.11px;color:#3f4266;transform:scaleX(0.900);">Bangkok</div>
<div class="a" style="left:708.8px;width:200px;text-align:center;top:471.14px;font-size:9.11px;color:#3f4266;transform:scaleX(0.900);">Bangkok</div>
<div class="a" style="left:767.6px;width:200px;text-align:center;top:471.23px;font-size:9.06px;color:#3f4266;transform:scaleX(0.900);">Thai Bangkok</div>
<svg class="a" style="left:974.5px;top:471.0px" width="11" height="9" viewBox="0 0 11 9"><path d="M0.5 7.9 H6.8" stroke="#c3c7cd" stroke-width="0.8"/><path d="M8.6 0.6 L9.9 1.4 L6.3 7.6 L5.0 6.9 Z" fill="#a9aeb6"/></svg>
<div class="a" style="left:270.7px;top:218.2px;width:27.5px;height:274.6px;background:transparent;border:2px solid #fb2b2e;box-shadow:0 1.5px 2px rgba(0,0,0,0.28),inset 0 1.5px 2px rgba(0,0,0,0.22)"></div>
<svg class="a" style="left:781px;top:519px" width="5" height="7" viewBox="0 0 5 7"><path d="M4 0.5 L1 3.5 L4 6.5" fill="none" stroke="#b5b8be" stroke-width="0.8"/></svg>
<div class="a" style="left:816.1px;top:513.6px;width:25.7px;height:20.0px;background:#eaeef2;border-radius:2px"></div>
<div class="a" style="left:728.9px;width:200px;text-align:center;top:518.89px;font-size:9.22px;color:#3f4350;transform:scaleX(0.900);">1</div>
<svg class="a" style="left:863.5px;top:519px" width="5" height="7" viewBox="0 0 5 7"><path d="M1 0.5 L4 3.5 L1 6.5" fill="none" stroke="#7b7f87" stroke-width="0.8"/></svg>
<div class="a" style="left:899.0px;top:519.08px;font-size:7.70px;color:#6f737b;transform:scaleX(0.900);transform-origin:0 0;">Display per page</div>
<div class="a" style="left:960.3px;top:513.8px;width:56.1px;height:20.0px;background:#e9edf1;border-radius:2px"></div>
<div class="a" style="left:968.4px;top:520.12px;font-size:7.78px;color:#3f4350;transform:scaleX(0.900);transform-origin:0 0;">10 entries</div>
<svg class="a" style="left:1004.5px;top:522.0px" width="7" height="4.5" viewBox="0 0 7 4.5"><path d="M0.6 0.6 L3.5 3.6 L6.4 0.6" fill="none" stroke="#b9bdc4" stroke-width="0.9"/></svg>
</body></html>
